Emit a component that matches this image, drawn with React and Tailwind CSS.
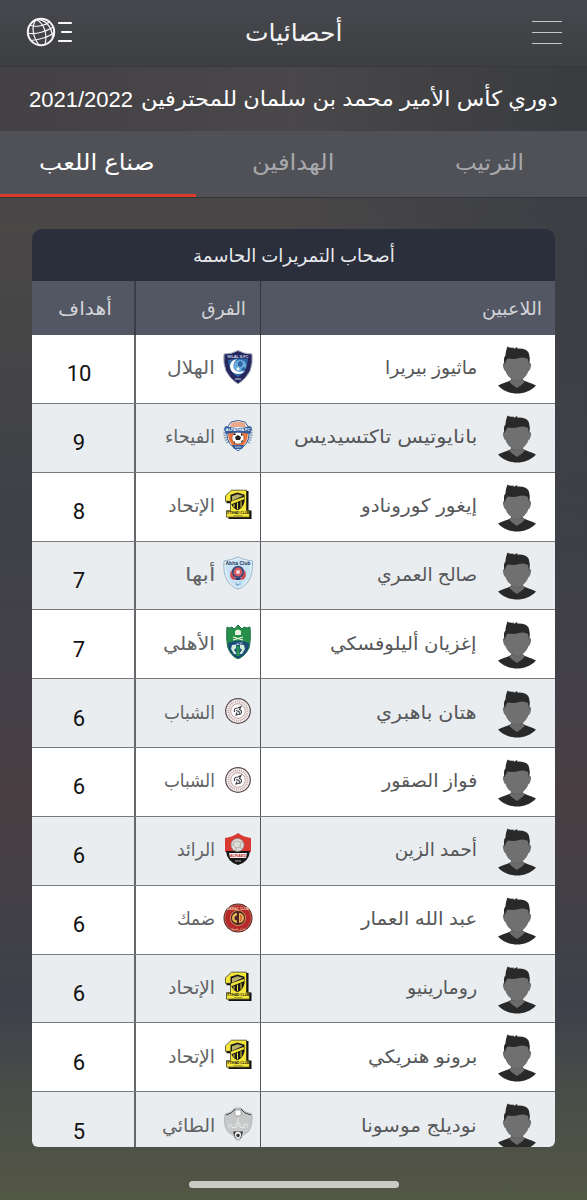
import { useLayoutEffect, useRef, useState } from "react";

const ARABIC = "font-['Liberation_Sans','DejaVu_Sans',sans-serif]";

// Condenses or widens a line of text so that it fills exactly `w` pixels.
function Fit({ w, className = "", children }) {
  const ref = useRef(null);
  const [scale, setScale] = useState(1);
  useLayoutEffect(() => {
    if (ref.current) setScale(w / ref.current.offsetWidth);
  }, [w, children]);
  return (
    <span dir="rtl" className={`block shrink-0 ${ARABIC} ${className}`} style={{ width: w }}>
      <span
        ref={ref}
        className="inline-block origin-right whitespace-nowrap"
        style={{ transform: `scaleX(${scale})` }}
      >
        {children}
      </span>
    </span>
  );
}

function Globe() {
  return (
    <svg width="48" height="32" viewBox="0 0 48 32" fill="none" stroke="#f7f7f8" className="mb-[2px]">
      <circle cx="15" cy="16" r="13.2" strokeWidth="2" />
      <g strokeWidth="1.2">
        <path d="M10 3.8C5.5 9 6 20 13 29" />
        <path d="M10 3.8C17 6 22 17 19 28.5" />
        <path d="M10 3.8C18 3 26 9 26.500 22" />
        <path d="M4 9C10 12 20 9 23.500 6" />
        <path d="M2 17C10 19 21 15 27.500 11" />
        <path d="M4.500 24.500C12 24 23 21 28 16.500" />
      </g>
      <path d="M33 7H45M36 16H45M33 25H45" strokeWidth="2.200" strokeLinecap="round" />
    </svg>
  );
}

function Avatar() {
  return (
    <svg width="40" height="48" viewBox="0 0 40 48" className="block">
      <path d="M1 39.500C6 37 11 36 14 34L20 40L26 34C29 36 34 37 39 39.500C34 45 27 47.500 20 47.500S6 45 1 39.500Z" fill="#292929" />
      <path d="M14 28H26V34.500L28 35.500Q25 39 20 42Q15 39 12 35.500L14 34.500Z" fill="#6b6b6b" />
      <path d="M14 32Q20 37 26 32V33.500Q20 37.500 14 33.500Z" fill="#585858" />
      <path d="M7.500 11H32.500V17Q34.500 16.500 34 20Q33 25 31.500 25C30 30 25 35 20 35S10 30 8.500 25Q7 25 6 20Q5.500 16.500 7.500 17Z" fill="#707070" />
      <path d="M7.500 18.500C6.500 14 7 11 8.500 9.500C8.500 6 9.500 3 10.500 0.500Q13 2.500 17 1.500L16.500 3Q19 1.500 20.500 1L20 2.500Q29 2 31.500 6.500Q33 10 32.500 15L32 18.500L31 13Q27 10.500 22 12T10.500 12.500L9 15Z" fill="#292929" />
    </svg>
  );
}

function Hilal() {
  return (
    <>
      <path d="M15 0.500Q21 4 29 4Q30 13 27 21Q23 29 15 34Q7 29 3 21Q0 13 1 4Q9 4 15 0.500Z" fill="#25285f" stroke="#a5a9b8" />
      <path d="M15 8.500L25 8.500Q24 22 15 27Q6 22 5 10Z" fill="#2d69a8" />
      <circle cx="17" cy="16" r="6.300" fill="#69abdc" />
      <path d="M14 9Q7 10 7 17Q8 24 15 24Q20 24 22 21Q12 24 10.500 17Q10 12 14 9Z" fill="#fff" />
      <path d="M15 12l3-1 2 3-2 3-3-1zM20 17l3 1-2 3-3-1z" fill="#2f66a3" />
      <path d="M15 17L17 19L15 21L13 19Z" fill="#e5f0fa" />
      <text x="15" y="7.500" textAnchor="middle" fontSize="3.800" fontWeight="700" fill="#d8dff0">HILAL S.FC</text>
      <path d="M12 29H18" stroke="#ced9ed" />
    </>
  );
}

function Fayha() {
  return (
    <>
      <path d="M3 8Q0 16 5 24M27 8Q30 16 25 24" stroke="#8ca4bd" strokeWidth="3" strokeDasharray="1.500 1" fill="none" />
      <path d="M8 3Q15 0 22 3L26 9Q27 22 21 27L15 32L9 27Q3 22 4 9Z" fill="#fff" stroke="#365a98" />
      <path d="M8 4Q15 1 22 4L23 8H7Z" fill="#e9a88a" />
      <path d="M5 13H25Q25 24 19 27H11Q5 24 5 13Z" fill="#e9753d" />
      <circle cx="15" cy="19" r="6" fill="#fff" stroke="#7d3525" strokeWidth=".5" />
      <path d="M15 16l3 2-1 3h-4l-1-3zM10 16l2-2 1 2zM18 14l2 2-2 1zM10 22l2 1v2zM20 21l-1 3-1-2z" fill="#222" />
      <path d="M1 10L3 7Q15 11 27 7L29 10L27 15Q15 12 3 15Z" fill="#315c9d" />
      <text x="15" y="12" textAnchor="middle" fontSize="4" fontWeight="700" fill="#fff">ALFAYHA FC</text>
      <path d="M9 26H21L19 30H11Z" fill="#315c9d" />
      <path d="M12 28H18" stroke="#bed1ea" />
    </>
  );
}

function Ittihad() {
  return (
    <g transform="translate(.5 .3) scale(1 .93)">
      <path d="M10 3H25V24H28V33H5V26H9V16H3V9Z" fill="#111" />
      <path d="M8 2H23V24H26V31H3V24H7V14H2V8Z" fill="#f4e73a" stroke="#232315" strokeWidth=".7" />
      <path d="M7 7L14 4.500L21 7V14Q20 21 14 23.500Q8 21 7 14Z" fill="#191919" />
      <path d="M8.500 8.500L14 6.500L19.500 8L8.500 13.500Z" fill="#b8b16b" />
      <path d="M8 14.500L20 10V11.500L8 16.500ZM10.500 17V20.500M14 15.500V22.500M17.500 14V20.500" fill="#f4e73a" stroke="#f4e73a" strokeWidth="1" />
      <text x="14.500" y="27.800" textAnchor="middle" fontSize="3.300" fontWeight="700" fill="#111">ITTIHAD CLUB</text>
      <path d="M10 29.500H19" stroke="#655f28" strokeWidth=".7" />
    </g>
  );
}

function Abha() {
  return (
    <>
      <path d="M1 5Q9 4 15 1Q21 4 29.500 5Q30 17 26 24Q22 31 15 33Q8 31 4 24Q0 17 1 5Z" fill="#e4f1f9" stroke="#93b5ca" />
      <path d="M3 7Q10 6 15 3Q21 6 27 7Q28 20 24 24Q20 30 15 31Q9 30 6 24Q2 17 3 7Z" fill="#c8e3f4" />
      <text x="15" y="9" textAnchor="middle" fontSize="5" fontWeight="700" fill="#26375e">Abha Club</text>
      <path d="M8 14Q5 24 13 24Q11 20 10 19M22 14Q25 24 17 24Q19 20 20 19" fill="#d24551" />
      <circle cx="15" cy="16" r="5.300" fill="#d95860" stroke="#3a4c76" strokeWidth="1.800" />
      <circle cx="15" cy="16" r="2" fill="#efdbe0" />
      <path d="M12 22H18L17 24H13Z" fill="#273e6e" />
      <text x="15" y="29" textAnchor="middle" fontSize="4" fill="#347caf">أبها</text>
    </>
  );
}

function Ahli() {
  return (
    <>
      <path d="M4 2Q6 4 9 2L11 4Q13 3 15 0L19 4L21 2Q24 4 27 2Q28 15 26 23Q22 31 15 34Q8 31 5 23Q3 15 4 2Z" fill="#26904a" stroke="#1f6e47" />
      <path d="M5 18Q15 13 26 18Q26 29 15 33.500Q5 29 5 18Z" fill="#194c76" />
      <path d="M12 6Q15 3 18 6V10H12Z" fill="#e8f3df" />
      <path d="M10 12L20 15M20 12L10 15" stroke="#f0f6df" strokeWidth="1.200" />
      <path d="M9 20H13V23L11 25L14 29H11L8 24ZM21 20H17V23L19 25L16 29H19L22 24Z" fill="#d3ecd9" />
      <path d="M13.500 21H16.500V31H13.500Z" fill="#279253" />
      <text x="15" y="19.500" textAnchor="middle" fontSize="3.500" fill="#fff">الأهلي</text>
    </>
  );
}

function Shabab() {
  return (
    <>
      <circle cx="15" cy="17" r="12.300" fill="#f2f0f0" stroke="#5c4a4e" strokeWidth="1.200" />
      <circle cx="15" cy="17" r="9.600" fill="none" stroke="#c4a3a0" strokeWidth="1.800" strokeDasharray="1 1" />
      <circle cx="15" cy="17" r="7.300" fill="#fff" stroke="#a57779" strokeWidth=".7" />
      <path d="M11.500 18Q10.500 14 15 14L18 12.500L16.500 15.500Q20 17 17.500 20L13 21L14 18.500M13 16.500L16 17.500L16.500 20" fill="none" stroke="#393b43" strokeWidth="1.100" />
    </>
  );
}

function Raed() {
  return (
    <>
      <path d="M2 6Q10 5 15 1Q20 5 28 6V20H2Z" fill="#d93b33" />
      <path d="M3 19H27Q26 30 15 33Q4 30 3 19Z" fill="#151515" />
      <circle cx="14.500" cy="13" r="6.500" fill="#dcdcd8" stroke="#888" strokeWidth=".6" />
      <path d="M11 10L15 9L18 11L17 15L13 16L10 13ZM8 13L10 13M13 16V19M18 11L20 10M17 15L19 17" fill="none" stroke="#a9a49d" strokeWidth=".8" />
      <path d="M6 21H24L23 26H7Z" fill="#eee" />
      <text x="15" y="25" textAnchor="middle" fontSize="4" fontWeight="700" fill="#c73530">ALRAED</text>
      <path d="M12 29H18" stroke="#aaa" />
    </>
  );
}

function Damac() {
  return (
    <>
      <circle cx="15" cy="17" r="14.500" fill="#55282d" />
      <circle cx="15" cy="17" r="13.300" fill="#b5292c" stroke="#d3a468" strokeWidth=".5" />
      <text x="15" y="8.500" textAnchor="middle" fontSize="3.200" fontWeight="700" fill="#f4d4b2">DAMAC CLUB</text>
      <circle cx="15" cy="17" r="7.600" fill="#502329" stroke="#dfad55" strokeWidth=".8" />
      <path d="M14 12A5 5 0 1 0 14 22V19.500A2.500 2.500 0 1 1 14 14.500Z" fill="#e5b754" />
      <path d="M16 12A5 5 0 0 1 16 22Z" fill="#e7b652" />
      <path d="M17.500 14Q19 17 17.500 20" fill="none" stroke="#bd312e" />
      <text x="15" y="28.500" textAnchor="middle" fontSize="3.400" fill="#f4d4b2">نادي ضمك</text>
    </>
  );
}

function Tai() {
  return (
    <>
      <path d="M2 7Q8 6 12 1H18Q22 6 29 7Q30 19 25 25L19 29L17 33H13L11 29L5 25Q0 19 2 7Z" fill="#c6c8c9" stroke="#aaa" strokeWidth=".7" />
      <path d="M3 8Q9 7 12 2M18 2Q21 7 28 8" stroke="#444" fill="none" />
      <path d="M12 3H18V6Q19 9 15 9Q11 9 12 6Z" fill="#fff" stroke="#777" strokeWidth=".6" />
      <path d="M6 21V18H9V20.500H13V16H17V20.500H21V17H24V21M15 11V20" stroke="#e6e7e7" fill="none" />
      <path d="M10 24.500H20L18 31H12Z" fill="#333" />
      <circle cx="15" cy="28" r="3.200" fill="#eee" />
      <path d="M15 26.500L17 28L16 30H14L13 28Z" fill="#333" />
    </>
  );
}

const TEAMS = {
  hilal: { name: "الهلال", w: 48, Crest: Hilal },
  fayha: { name: "الفيحاء", w: 50, Crest: Fayha },
  ittihad: { name: "الإتحاد", w: 47, Crest: Ittihad },
  abha: { name: "أبها", w: 30, Crest: Abha },
  ahli: { name: "الأهلي", w: 52, Crest: Ahli },
  shabab: { name: "الشباب", w: 51, Crest: Shabab },
  raed: { name: "الرائد", w: 38, Crest: Raed },
  damac: { name: "ضمك", w: 38, Crest: Damac },
  tai: { name: "الطائي", w: 53, Crest: Tai },
};

const ROWS = [
  ["ماثيوز بيريرا", 92, "hilal", 10],
  ["بانايوتيس تاكتسيديس", 183, "fayha", 9],
  ["إيغور كورونادو", 116, "ittihad", 8],
  ["صالح العمري", 100, "abha", 7],
  ["إغزيان أليلوفسكي", 147, "ahli", 7],
  ["هتان باهبري", 101, "shabab", 6],
  ["فواز الصقور", 95, "shabab", 6],
  ["أحمد الزين", 82, "raed", 6],
  ["عبد الله العمار", 116, "damac", 6],
  ["رومارينيو", 70, "ittihad", 6],
  ["برونو هنريكي", 109, "ittihad", 6],
  ["نوديلج موسونا", 116, "tai", 5],
];

function Row({ name, w, team, goals }) {
  const { name: teamName, w: teamW, Crest } = TEAMS[team];
  return (
    <div className="flex h-[68.85px] shrink-0 border-b border-[#77797c] bg-white even:bg-[#e9edf0]">
      <div className="flex w-[294px] shrink-0 items-center pr-[18px]">
        <div className="pt-[2px]"><Avatar /></div>
        <Fit w={w} className="mr-[20px] pb-[1px] text-[18.5px] leading-6 text-[#565759]">{name}</Fit>
      </div>
      <div className="flex w-[127px] shrink-0 items-center border-r border-l-2 border-r-[#55565a] border-l-[#66676b] pr-[7px]">
        <svg width="30" height="34" viewBox="0 0 30 34" className="mb-[4px] block shrink-0 font-['Liberation_Sans','DejaVu_Sans',sans-serif]">
          <Crest />
        </svg>
        <Fit w={teamW} className="mr-[8px] pb-[1px] text-[18.5px] leading-6 text-[#626365]">{teamName}</Fit>
      </div>
      <div className="flex flex-1 items-center justify-center pt-[11px] pr-[8px] font-['Roboto',sans-serif] text-[22px] leading-6 text-[#111]">
        {goals}
      </div>
    </div>
  );
}

export default function App() {
  return (
    <div
      dir="rtl"
      className="flex h-[1200px] w-[587px] flex-col overflow-hidden bg-[radial-gradient(ellipse_320px_420px_at_100%_22%,#3b3e44_0%,#3b3e4400_100%),linear-gradient(180deg,#454346_0%,#4a4747_19%,#454547_30%,#3f4147_42%,#43404a_56%,#493f42_66%,#434046_74%,#3e414a_84%,#4a4d48_91%,#535745_100%)]"
    >
      <header className="flex h-[67px] shrink-0 items-center justify-between border-b border-[#37383b] bg-linear-to-b from-[#47484d] to-[#3e3f43] pr-[25px] pl-[26px]">
        <div className="flex w-[48px] flex-col gap-[10px] pb-[1px]">
          <div className="h-[1px] w-[30px] bg-[#c6c6c9]" />
          <div className="h-[1px] w-[30px] bg-[#c6c6c9]" />
          <div className="h-[1px] w-[30px] bg-[#c6c6c9]" />
        </div>
        <Fit w={97} className="text-[24px] leading-8 text-[#f4f4f5]">أحصائيات</Fit>
        <Globe />
      </header>

      <div className="flex h-[64px] shrink-0 items-center bg-linear-to-r from-[#434144] via-[#494749] to-[#393b3f] pr-[29px]">
        <Fit w={417} className="text-[21px] leading-8 text-white">دوري كأس الأمير محمد بن سلمان للمحترفين</Fit>
        <span className="mr-[8px] pt-[1px] font-['Liberation_Sans',sans-serif] text-[22px] leading-8 text-white">2021/2022</span>
      </div>

      <nav className="flex h-[67px] shrink-0 border-b border-[#35363b] bg-[#505156] text-[#a8a9ad]">
        <div className="flex flex-1 items-center justify-center pr-[1px] pb-[3px]">
          <Fit w={69} className="text-[22px] leading-8">الترتيب</Fit>
        </div>
        <div className="flex flex-1 items-center justify-center pr-[2px] pb-[3px]">
          <Fit w={83} className="text-[22px] leading-8">الهدافين</Fit>
        </div>
        <div className="flex w-[196px] items-center justify-center border-b-[3px] border-[#dc3c2d] pr-[2px] text-white">
          <Fit w={116} className="text-[22px] leading-8">صناع اللعب</Fit>
        </div>
      </nav>

      <main className="mx-[32px] mt-[31px] flex h-[918px] w-[523px] shrink-0 flex-col overflow-hidden rounded-t-[10px] rounded-b-[6px] bg-[#2b2e3b]">
        <div className="flex h-[52px] shrink-0 items-center justify-center pt-[1px]">
          <Fit w={202} className="text-[18.5px] leading-6 text-[#e8e9ed]">أصحاب التمريرات الحاسمة</Fit>
        </div>
        <div className="flex h-[54px] shrink-0 bg-[#535763] text-[#d2d3d8]">
          <div className="flex w-[294px] items-center pt-[1px] pr-[13px]">
            <Fit w={60} className="text-[18.5px] leading-6">اللاعبين</Fit>
          </div>
          <div className="flex w-[127px] items-center border-r border-l-2 border-r-[#333640] border-l-[#3a3d48] pt-[1px] pr-[14px]">
            <Fit w={45} className="text-[18.5px] leading-6">الفرق</Fit>
          </div>
          <div className="flex flex-1 items-center pt-[1px] pr-[22px]">
            <Fit w={54} className="text-[18.5px] leading-6">أهداف</Fit>
          </div>
        </div>
        <div className="flex flex-col">
          {ROWS.map(([name, w, team, goals]) => (
            <Row key={name} name={name} w={w} team={team} goals={goals} />
          ))}
        </div>
      </main>

      <div className="mt-[34px] flex shrink-0 justify-center">
        <div className="h-[7px] w-[210px] rounded-full bg-[#c9cac6]" />
      </div>
    </div>
  );
}
